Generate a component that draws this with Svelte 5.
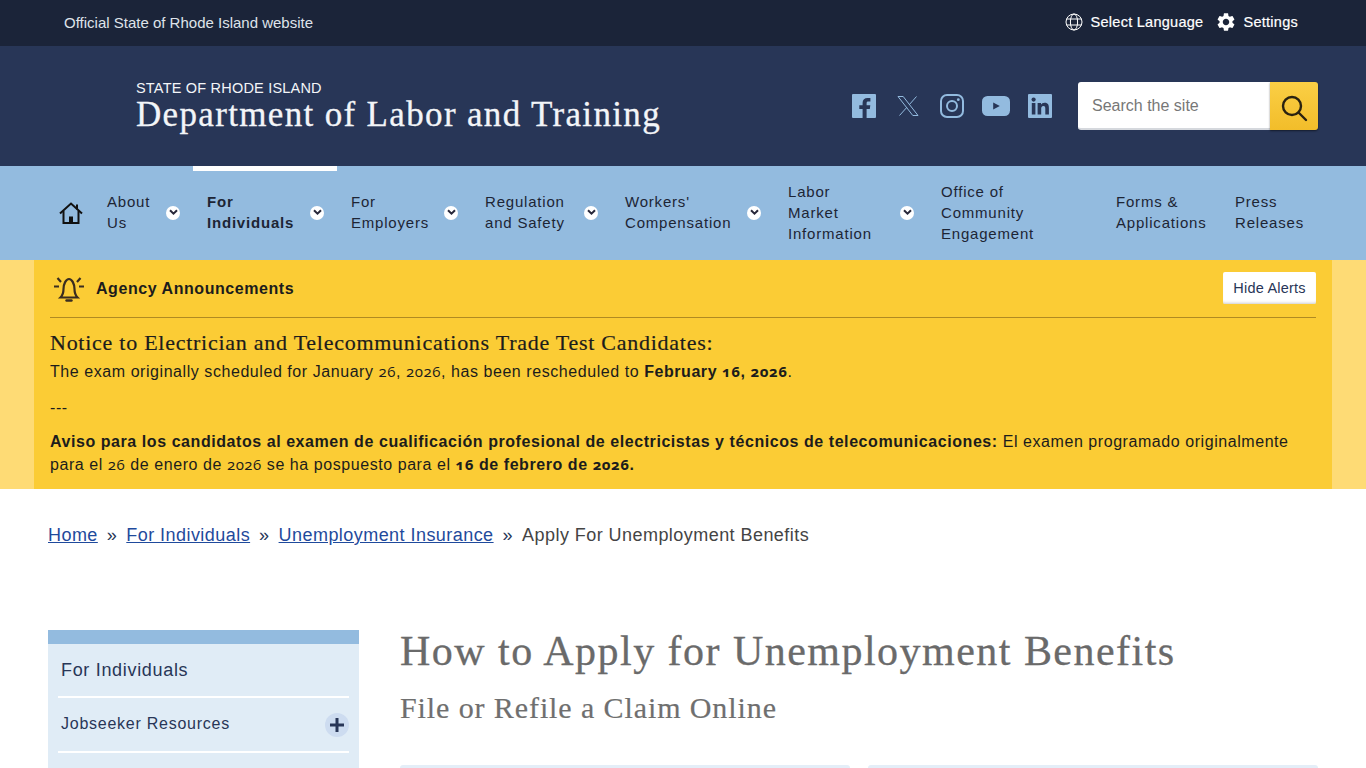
<script>
	const navItems = [
		{ lines: ['About', 'Us'], caret: true },
		{ lines: ['For', 'Individuals'], caret: true, active: true },
		{ lines: ['For', 'Employers'], caret: true },
		{ lines: ['Regulation', 'and Safety'], caret: true },
		{ lines: ["Workers'", 'Compensation'], caret: true },
		{ lines: ['Labor', 'Market', 'Information'], caret: true },
		{ lines: ['Office of', 'Community', 'Engagement'] },
		{ lines: ['Forms &', 'Applications'] },
		{ lines: ['Press', 'Releases'] }
	];
</script>

<div class="page">
	<div class="topbar">
		<span class="official">Official State of Rhode Island website</span>
		<div class="tools">
			<a class="tool" href="#lang">
				<svg width="18" height="18" viewBox="0 0 18 18" fill="none" stroke="currentColor" stroke-width="1">
					<circle cx="9" cy="9" r="8" />
					<ellipse cx="9" cy="9" rx="3.6" ry="8" />
					<path d="M1.6 6h14.8M1.6 12h14.8" />
				</svg>
				Select Language
			</a>
			<a class="tool" href="#settings">
				<svg width="18" height="18" viewBox="2.4 2 19.2 20" fill="currentColor">
					<path d="M19.14 12.94c.04-.3.06-.61.06-.94 0-.32-.02-.64-.07-.94l2.03-1.58c.18-.14.23-.41.12-.61l-1.92-3.32c-.12-.22-.37-.29-.59-.22l-2.39.96c-.5-.38-1.03-.7-1.62-.94l-.36-2.54c-.04-.24-.24-.41-.48-.41h-3.84c-.24 0-.43.17-.47.41l-.36 2.54c-.59.24-1.13.57-1.62.94l-2.39-.96c-.22-.08-.47 0-.59.22L2.74 8.87c-.12.21-.08.47.12.61l2.03 1.58c-.05.3-.09.63-.09.94s.02.64.07.94l-2.03 1.58c-.18.14-.23.41-.12.61l1.92 3.32c.12.22.37.29.59.22l2.39-.96c.5.38 1.03.7 1.62.94l.36 2.54c.05.24.24.41.48.41h3.84c.24 0 .44-.17.47-.41l.36-2.54c.59-.24 1.13-.56 1.62-.94l2.39.96c.22.08.47 0 .59-.22l1.92-3.32c.12-.22.07-.47-.12-.61l-2.01-1.58zM12 15.6c-1.98 0-3.6-1.62-3.6-3.6s1.62-3.6 3.6-3.6 3.6 1.62 3.6 3.6-1.62 3.6-3.6 3.6z" />
				</svg>
				Settings
			</a>
		</div>
	</div>

	<header class="masthead">
		<div class="brand">
			<div class="state">STATE OF RHODE ISLAND</div>
			<div class="dept">Department of Labor and Training</div>
		</div>
		<div class="socials">
			<svg class="wide" width="24" height="24" viewBox="0 0 24 24">
				<rect width="24" height="24" rx="1" fill="#93bbdf" />
				<path transform="translate(-2.4 0)" d="M17 24v-9h3.200l.5-3.800h-3.700V9.200c0-1 .4-1.700 1.800-1.700h2V4.100c-.6-.1-1.700-.2-2.900-.2-2.900 0-4.900 1.700-4.900 4.800v2.500H9.700V15h3.300v9z" fill="#283657" />
			</svg>
			<svg class="wide" width="24" height="24" viewBox="0 0 24 24" fill="none" stroke="#93bbdf" stroke-width="1">
				<path d="M2 2.500h5.200L22 21.500h-5.200zM20.500 2.500l-7.300 8.300M10.800 13.400l-7.300 8.100" />
			</svg>
			<svg width="24" height="24" viewBox="0 0 24 24" fill="none" stroke="#93bbdf" stroke-width="2">
				<rect x="1" y="1" width="22" height="22" rx="6" />
				<circle cx="12" cy="12" r="5" />
				<circle cx="18.300" cy="5.700" r="1.400" fill="#93bbdf" stroke="none" />
			</svg>
			<svg width="28" height="20" viewBox="0 0 28 20">
				<rect width="28" height="20" rx="5.500" fill="#93bbdf" />
				<path d="M11.200 6.500l6.600 3.500-6.600 3.500z" fill="#283657" />
			</svg>
			<svg width="24" height="24" viewBox="0 0 24 24">
				<rect width="24" height="24" rx="1" fill="#93bbdf" />
				<g fill="#283657">
					<circle cx="5.600" cy="5.600" r="2.100" />
					<rect x="3.800" y="9" width="3.600" height="11.500" />
					<path d="M9.600 9h3.400v1.600c.6-1 1.800-1.900 3.600-1.900 3.700 0 4.300 2.400 4.300 5.500v6.300h-3.600v-5.600c0-1.400 0-3-1.900-3s-2.200 1.400-2.200 2.900v5.700H9.600z" />
				</g>
			</svg>
		</div>
		<form class="search">
			<input placeholder="Search the site" />
			<button type="button" aria-label="Search">
				<svg width="28" height="28" viewBox="0 0 28 28" fill="none" stroke="#2a2210" stroke-width="2.400">
					<circle cx="12" cy="12" r="9" />
					<path d="M18.500 18.500l7.500 7.500" stroke-linecap="round" />
				</svg>
			</button>
		</form>
	</header>

	<nav class="mainnav">
		<a class="home" href="#home" aria-label="Home">
			<svg width="24" height="22" viewBox="0 0 24 22" fill="none" stroke="#111" stroke-width="2">
				<path d="M1 11.500L12 1.500l11 10" />
				<path d="M4.500 9v12h15V9" />
				<path d="M18 2.500v5" />
				<rect x="10" y="14.500" width="4" height="6.500" fill="#111" stroke="none" />
			</svg>
		</a>
		{#each navItems as item}
			<a class="navitem" class:active={item.active} href="#nav">
				<span class="navtext">
					{#each item.lines as line}
						<span class="navline">{line}</span>
					{/each}
				</span>
				{#if item.caret}
					<span class="caret">
						<svg width="9" height="7" viewBox="0 0 9 7" fill="none" stroke="#28283a" stroke-width="2">
							<path d="M1 1.200l3.500 3.500L8 1.200" />
						</svg>
					</span>
				{/if}
			</a>
		{/each}
	</nav>

	<section class="alerts">
		<div class="alerts-inner">
			<div class="alerts-head">
				<svg width="32" height="28" viewBox="0 0 32 28" fill="none" stroke="#3a2d20" stroke-width="2.200">
					<path d="M7.500 22.500C10 20 10.500 17.500 10.500 14 10.500 9 13 4 16 4s5.500 5 5.500 10c0 3.500.5 6 3 8.500z" />
					<path d="M13.500 25.500h5" stroke-width="2.400" stroke-linecap="round" />
					<path d="M1 11.500h5M26 11.500h5M4.500 3L8 7M27.500 3L24 7" />
				</svg>
				<strong class="alerts-title">Agency Announcements</strong>
				<button class="hide" type="button">Hide Alerts</button>
			</div>
			<h3>Notice to Electrician and Telecommunications Trade Test Candidates:</h3>
			<p class="first">The exam originally scheduled for January <span class="os">26</span>, <span class="os">2026</span>, has been rescheduled to <strong>February <span class="os">16</span>, <span class="os">2026</span></strong>.</p>
			<p class="dash">---</p>
			<p class="aviso"><strong>Aviso para los candidatos al examen de cualificación profesional de electricistas y técnicos de telecomunicaciones:</strong> El examen programado originalmente para el <span class="os">26</span> de enero de <span class="os">2026</span> se ha pospuesto para el <strong><span class="os">16</span> de febrero de <span class="os">2026</span>.</strong></p>
		</div>
	</section>

	<div class="crumbs">
		<a href="#home">Home</a><span class="sep">»</span><a href="#ind">For Individuals</a><span class="sep">»</span><a href="#ui">Unemployment Insurance</a><span class="sep">»</span><span>Apply For Unemployment Benefits</span>
	</div>

	<div class="body">
		<aside class="side">
			<div class="side-title">For Individuals</div>
			<div class="side-row">
				Jobseeker Resources
				<span class="plus">
					<svg width="16" height="16" viewBox="0 0 16 16" fill="none" stroke="#283657" stroke-width="3">
						<path d="M8 1v14M1 8h14" />
					</svg>
				</span>
			</div>
		</aside>
		<main class="content">
			<h1>How to Apply for Unemployment Benefits</h1>
			<h2>File or Refile a Claim Online</h2>
			<div class="cards">
				<div class="card"></div>
				<div class="card"></div>
			</div>
		</main>
	</div>
</div>

<style>
	:global(body) {
		margin: 0;
		background: #fff;
	}

	.page {
		height: 768px;
		overflow: hidden;
		font-family: 'Liberation Sans', Arial, sans-serif;
	}

	.topbar {
		height: 46px;
		box-sizing: border-box;
		padding: 0 68px 2px 64px;
		background: #1b2439;
		display: flex;
		align-items: center;
		justify-content: space-between;
		color: #dfe3ea;
		font-size: 15px;
	}

	.tools {
		display: flex;
		gap: 14px;
		font-size: 14.5px;
	}

	.tool {
		display: flex;
		align-items: center;
		gap: 8px;
		color: #fff;
		text-decoration: none;
		letter-spacing: 0.27px;
		-webkit-text-stroke: 0.2px #fff;
	}

	.masthead {
		height: 120px;
		box-sizing: border-box;
		padding: 0 48px 0 136px;
		background: #283657;
		display: flex;
		align-items: center;
	}

	.brand {
		flex: 1;
		color: #f3f5f8;
	}

	.state {
		font-size: 14.5px;
		line-height: 16px;
		letter-spacing: 0.2px;
	}

	.dept {
		font-family: 'Liberation Serif', serif;
		font-size: 35px;
		line-height: 36px;
		letter-spacing: 1.34px;
		-webkit-text-stroke: 0.3px #f3f5f8;
		padding-top: 1px;
		margin-bottom: -1px;
	}

	.socials {
		display: flex;
		align-items: center;
		gap: 18px;
		margin-right: 26px;
	}

	.socials .wide {
		margin-right: 2px;
	}

	.search {
		display: flex;
		height: 48px;
	}

	.search input {
		width: 192px;
		box-sizing: border-box;
		border: none;
		border-bottom: 2px solid #d5d8dd;
		border-radius: 3px 0 0 3px;
		padding: 2px 14px 0;
		font: 16px 'Liberation Sans', sans-serif;
		background: #fff;
	}

	.search input::placeholder {
		color: #777;
	}

	.search button {
		width: 48px;
		padding: 4px 0 0 0;
		border: none;
		border-radius: 0 3px 3px 0;
		background: linear-gradient(#fbcf45, #f2bd2a);
		box-shadow: 0 1px 2px rgba(0, 0, 0, 0.5);
		display: flex;
		align-items: center;
		justify-content: center;
	}

	.mainnav {
		height: 94px;
		padding: 0 48px;
		background: #93bbdf;
		display: grid;
		grid-template-columns: 45px 100px 144px 134px 140px 163px 153px 175px 119px 97px;
	}

	.home {
		display: flex;
		align-items: center;
		padding-left: 11px;
	}

	.navitem {
		display: flex;
		align-items: center;
		justify-content: space-between;
		padding: 0 13px 7px 14px;
		color: #1d2535;
		text-decoration: none;
		font-size: 15px;
		line-height: 21px;
		letter-spacing: 0.8px;
		border-top: 5px solid transparent;
	}

	.navitem.active {
		border-top-color: #fff;
		font-weight: 700;
	}

	.navline {
		display: block;
	}

	.caret {
		width: 14px;
		height: 14px;
		border-radius: 50%;
		background: #fff;
		display: flex;
		align-items: center;
		justify-content: center;
		margin-top: 1px;
	}

	.alerts {
		background: #fedb75;
		padding: 0 34px;
	}

	.alerts-inner {
		background: #fbcc35;
		padding: 0 16px;
		height: 229px;
		color: #1c1c1c;
		box-sizing: border-box;
		font-size: 16px;
		letter-spacing: 0.56px;
	}

	.alerts-head {
		height: 58px;
		box-sizing: border-box;
		display: flex;
		align-items: center;
		border-bottom: 1px solid #b08a22;
		padding-left: 3px;
		gap: 11px;
	}

	.hide {
		margin: 0 0 2px auto;
		height: 32px;
		width: 93px;
		padding: 0;
		border: none;
		border-radius: 2px;
		background: #fff;
		color: #283657;
		font: 14.5px 'Liberation Sans', sans-serif;
		letter-spacing: 0.2px;
		box-shadow: inset 0 -3px 3px -2px #ccc;
	}

	h3 {
		font-family: 'Liberation Serif', serif;
		font-weight: 400;
		font-size: 22px;
		line-height: 24px;
		margin: 13px 0 0;
		letter-spacing: 0.74px;
		-webkit-text-stroke: 0.2px #1c1c1c;
	}

	.alerts-inner p {
		margin: 0;
		line-height: 23px;
	}

	.alerts-inner .first {
		margin-top: 5px;
	}

	.alerts-inner .dash {
		margin-top: 13px;
	}

	.alerts-inner .aviso {
		margin-top: 11px;
	}

	.os {
		font-family: 'Open Sans', sans-serif;
		font-size: 15px;
		line-height: 1;
		font-feature-settings: 'onum';
	}

	.crumbs {
		padding: 35px 48px 0;
		height: 106px;
		box-sizing: border-box;
		font-size: 18px;
		line-height: 22px;
		letter-spacing: 0.45px;
		color: #444;
	}

	.crumbs a {
		color: #1f4a9c;
	}

	.sep {
		margin: 0 9px;
		color: #283657;
	}

	.body {
		padding: 35px 48px 0;
		display: flex;
		gap: 41px;
	}

	.side {
		width: 311px;
		height: 200px;
		box-sizing: border-box;
		background: #e0ecf6;
		border-top: 14px solid #93bbdf;
		padding: 0 10px;
		flex: none;
		color: #283657;
	}

	.side-title {
		height: 54px;
		padding: 14px 3px 0;
		box-sizing: border-box;
		border-bottom: 2px solid #fff;
		font-size: 18px;
		line-height: 24px;
		letter-spacing: 0.68px;
	}

	.side-row {
		height: 55px;
		padding: 0 0 2px 3px;
		box-sizing: border-box;
		border-bottom: 2px solid #fff;
		font-size: 16px;
		letter-spacing: 0.75px;
		display: flex;
		align-items: center;
		justify-content: space-between;
	}

	.plus {
		width: 24px;
		height: 24px;
		border-radius: 50%;
		background: #cddcf0;
		display: flex;
		align-items: center;
		justify-content: center;
		margin: 3px 0 0;
	}

	.content {
		flex: 1;
	}

	h1 {
		font-family: 'Liberation Serif', serif;
		font-weight: 400;
		font-size: 42px;
		line-height: 44px;
		margin: -1px 0 0;
		color: #6a6a6a;
		letter-spacing: 1.47px;
		-webkit-text-stroke: 0.3px #6a6a6a;
	}

	h2 {
		font-family: 'Liberation Serif', serif;
		font-weight: 400;
		font-size: 30px;
		line-height: 34px;
		margin: 18px 0 0;
		color: #6f6f6f;
		letter-spacing: 0.9px;
		-webkit-text-stroke: 0.2px #6f6f6f;
	}

	.cards {
		display: grid;
		grid-template-columns: 450px 450px;
		gap: 18px;
		margin-top: 40px;
	}

	.card {
		height: 100px;
		background: #e4eef8;
		border-radius: 3px;
	}
</style>
